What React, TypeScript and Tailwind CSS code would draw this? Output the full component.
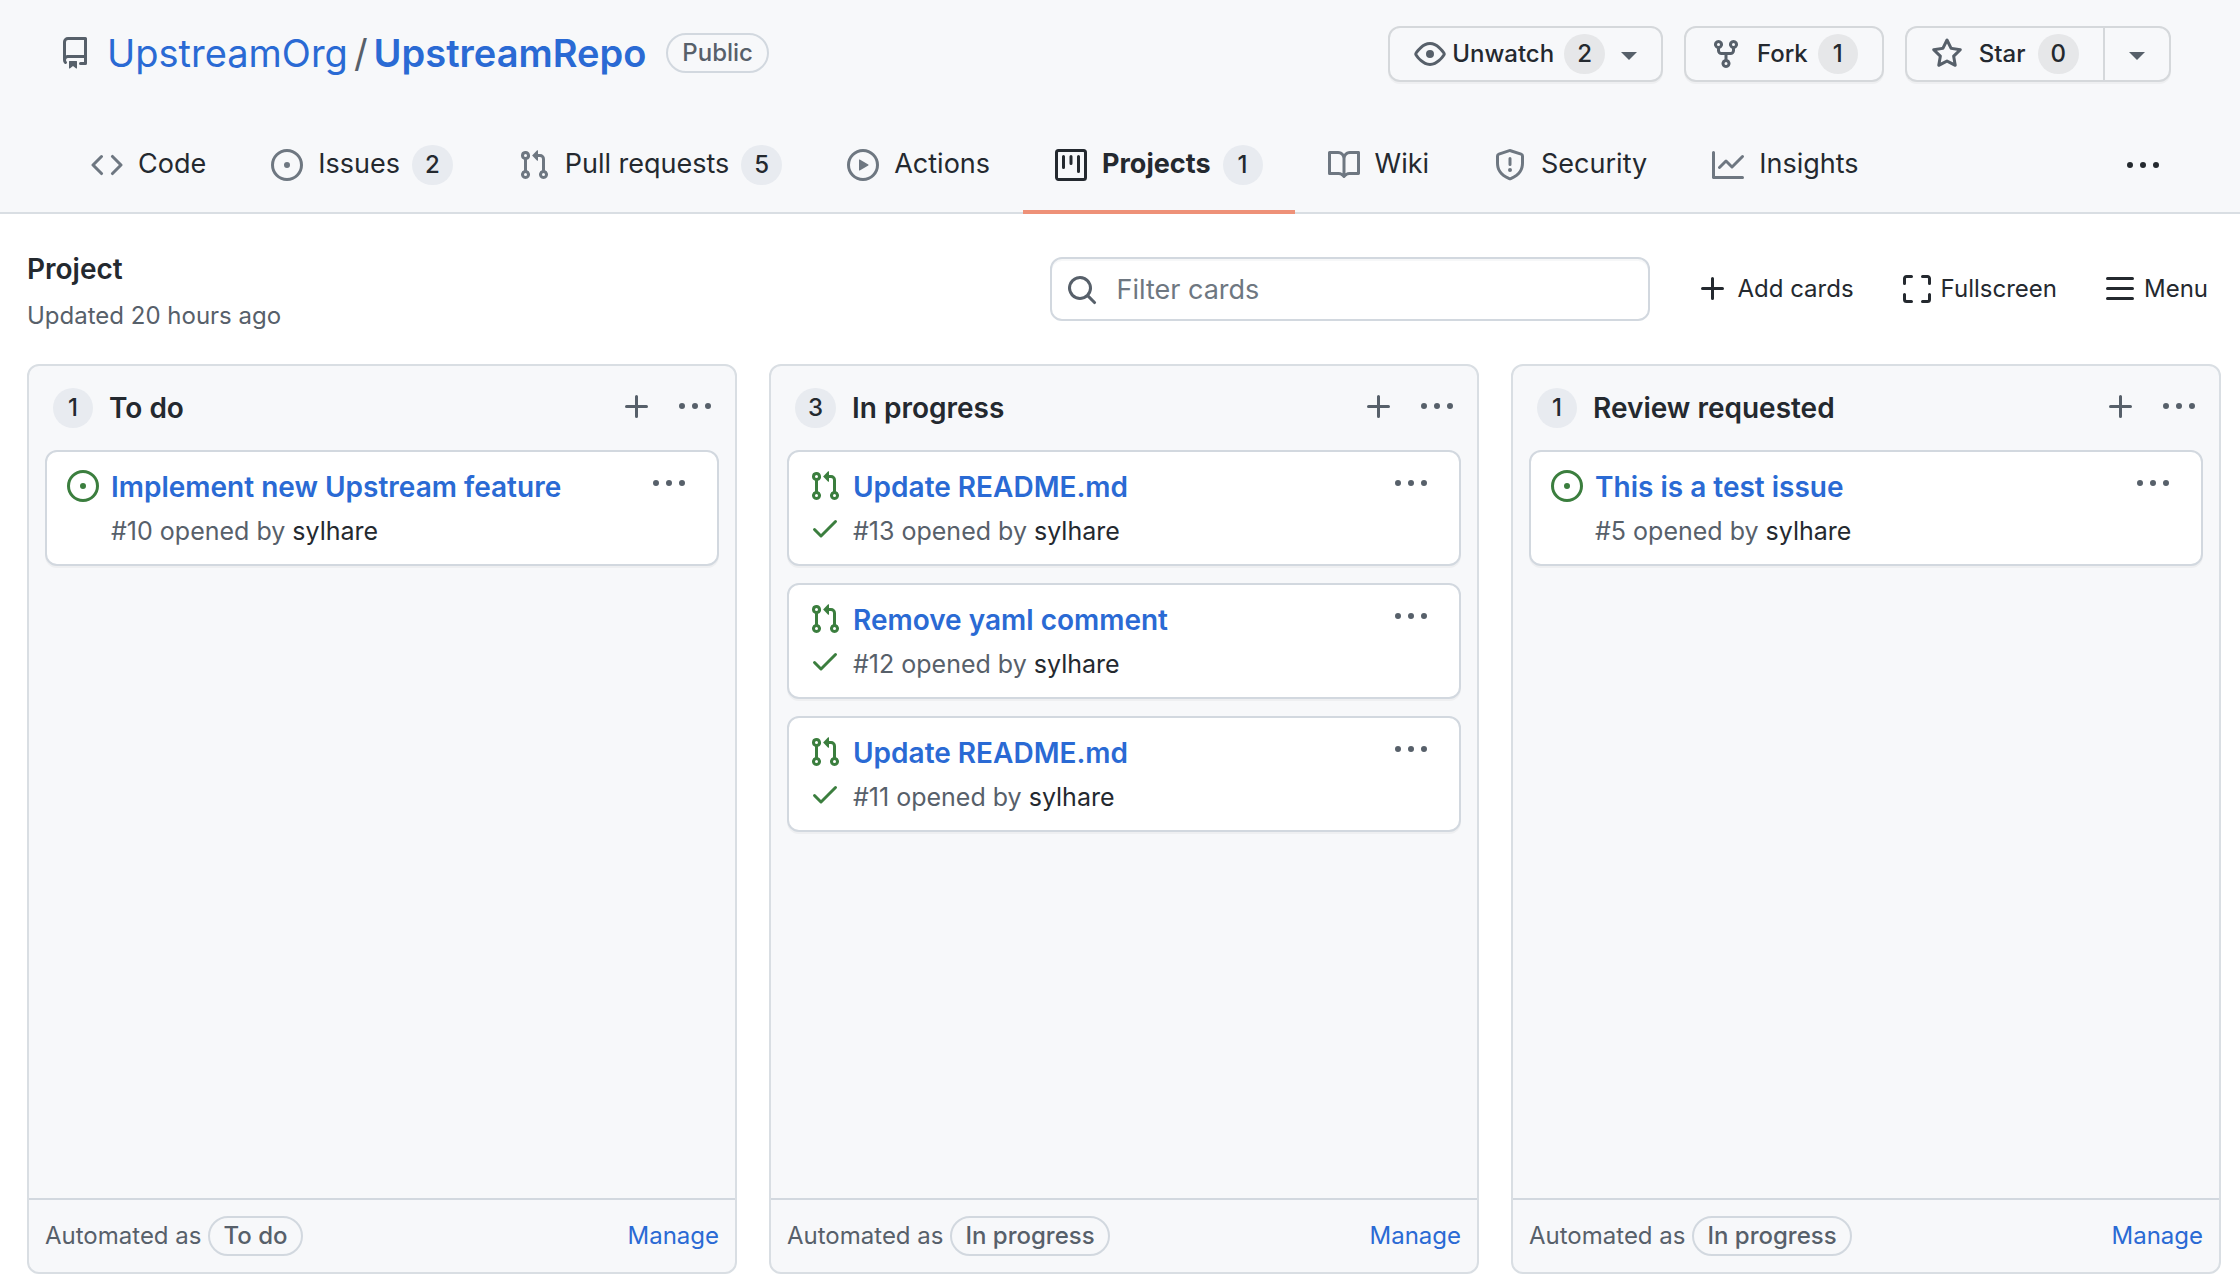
import type { ReactNode } from "react";

const paths = {
  repo: "M2 2.5A2.5 2.5 0 014.5 0h8.75a.75.75 0 01.75.75v12.5a.75.75 0 01-.75.75h-2.5a.75.75 0 110-1.5h1.75v-2h-8a1 1 0 00-.714 1.7.75.75 0 01-1.072 1.05A2.495 2.495 0 012 11.5v-9zm10.5-1V9h-8c-.356 0-.694.074-1 .208V2.5a1 1 0 011-1h8zM5 12.25v3.25a.25.25 0 00.4.2l1.45-1.087a.25.25 0 01.3 0L8.6 15.7a.25.25 0 00.4-.2v-3.25a.25.25 0 00-.25-.25h-3.5a.25.25 0 00-.25.25z",
  code: "M4.72 3.22a.75.75 0 011.06 1.06L2.06 8l3.72 3.72a.75.75 0 11-1.06 1.06L.47 8.53a.75.75 0 010-1.06l4.25-4.25zm6.56 0a.75.75 0 10-1.06 1.06L13.94 8l-3.72 3.72a.75.75 0 101.06 1.06l4.25-4.25a.75.75 0 000-1.06l-4.25-4.25z",
  issue: "M8 9.5a1.5 1.5 0 100-3 1.5 1.5 0 000 3zM8 0a8 8 0 100 16A8 8 0 008 0zM1.5 8a6.5 6.5 0 1113 0 6.5 6.5 0 01-13 0z",
  pull: "M7.177 3.073L9.573.677A.25.25 0 0110 .854v4.792a.25.25 0 01-.427.177L7.177 3.427a.25.25 0 010-.354zM3.75 2.5a.75.75 0 100 1.5.75.75 0 000-1.5zm-2.25.75a2.25 2.25 0 113 2.122v5.256a2.251 2.251 0 11-1.5 0V5.372A2.25 2.25 0 011.5 3.25zM11 2.5h-1V4h1a1 1 0 011 1v5.628a2.251 2.251 0 101.5 0V5A2.5 2.5 0 0011 2.5zm1 10.25a.75.75 0 111.5 0 .75.75 0 01-1.5 0zM3.75 12a.75.75 0 100 1.5.75.75 0 000-1.5z",
  play: "M1.5 8a6.5 6.5 0 1113 0 6.5 6.5 0 01-13 0zM8 0a8 8 0 100 16A8 8 0 008 0zM6.379 5.227A.25.25 0 006 5.442v5.117a.25.25 0 00.379.214l4.264-2.559a.25.25 0 000-.428L6.379 5.227z",
  project: "M1.75 0A1.75 1.75 0 000 1.75v12.5C0 15.216.784 16 1.75 16h12.5A1.75 1.75 0 0016 14.25V1.75A1.75 1.75 0 0014.25 0H1.75zM1.5 1.75a.25.25 0 01.25-.25h12.5a.25.25 0 01.25.25v12.5a.25.25 0 01-.25.25H1.75a.25.25 0 01-.25-.25V1.75zM11.75 3a.75.75 0 00-.75.75v7.5a.75.75 0 001.5 0v-7.5a.75.75 0 00-.75-.75zm-8.25.75a.75.75 0 011.5 0v5.5a.75.75 0 01-1.5 0v-5.5zM8 3a.75.75 0 00-.75.75v3.5a.75.75 0 001.5 0v-3.5A.75.75 0 008 3z",
  book: "M0 1.75A.75.75 0 01.75 1h4.253c1.227 0 2.317.59 3 1.501A3.744 3.744 0 0111.006 1h4.245a.75.75 0 01.75.75v10.5a.75.75 0 01-.75.75h-4.507a2.25 2.25 0 00-1.591.659l-.622.621a.75.75 0 01-1.06 0l-.622-.621A2.25 2.25 0 005.258 13H.75a.75.75 0 01-.75-.75V1.75zm8.755 3a2.25 2.25 0 012.25-2.25H14.5v9h-3.757c-.71 0-1.4.201-1.992.572l.004-7.322zm-1.504 7.324l.004-5.073-.002-2.253A2.25 2.25 0 005.003 2.5H1.5v9h3.757a3.75 3.75 0 011.994.574z",
  shield: "M7.467.133a1.75 1.75 0 011.066 0l5.25 1.68A1.75 1.75 0 0115 3.48V7c0 1.566-.32 3.182-1.303 4.682-.983 1.498-2.585 2.813-5.032 3.855a1.7 1.7 0 01-1.33 0c-2.447-1.042-4.049-2.357-5.032-3.855C1.32 10.182 1 8.566 1 7V3.48a1.75 1.75 0 011.217-1.667l5.25-1.68zm.61 1.429a.25.25 0 00-.153 0l-5.25 1.68a.25.25 0 00-.174.238V7c0 1.358.275 2.666 1.057 3.86.784 1.194 2.121 2.34 4.366 3.297a.2.2 0 00.154 0c2.245-.956 3.582-2.104 4.366-3.298C13.225 9.666 13.5 8.36 13.5 7V3.48a.25.25 0 00-.174-.237l-5.25-1.68zM9 10.5a1 1 0 11-2 0 1 1 0 012 0zm-.25-5.75a.75.75 0 10-1.5 0v3a.75.75 0 001.5 0v-3z",
  graph: "M1.5 1.75a.75.75 0 00-1.5 0v12.5c0 .414.336.75.75.75h14.5a.75.75 0 000-1.5H1.5V1.75zm14.28 2.53a.75.75 0 00-1.06-1.06L10 7.94 7.53 5.47a.75.75 0 00-1.06 0L3.22 8.72a.75.75 0 001.06 1.06L7 7.06l2.47 2.47a.75.75 0 001.06 0l5.25-5.25z",
  dots: "M8 9a1.5 1.5 0 100-3 1.5 1.5 0 000 3zM1.5 9a1.5 1.5 0 100-3 1.5 1.5 0 000 3zm13 0a1.5 1.5 0 100-3 1.5 1.5 0 000 3z",
  eye: "M1.679 7.932c.412-.621 1.242-1.75 2.366-2.717C5.175 4.242 6.527 3.5 8 3.5c1.473 0 2.824.742 3.955 1.715 1.124.967 1.954 2.096 2.366 2.717a.119.119 0 010 .136c-.412.621-1.242 1.75-2.366 2.717C10.825 11.758 9.473 12.5 8 12.5c-1.473 0-2.824-.742-3.955-1.715C2.92 9.818 2.09 8.69 1.679 8.068a.119.119 0 010-.136zM8 2c-1.981 0-3.67.992-4.933 2.078C1.797 5.169.88 6.423.43 7.1a1.619 1.619 0 000 1.798c.45.678 1.367 1.932 2.637 3.024C4.329 13.008 6.019 14 8 14c1.981 0 3.67-.992 4.933-2.078 1.27-1.091 2.187-2.345 2.637-3.023a1.619 1.619 0 000-1.798c-.45-.678-1.367-1.932-2.637-3.023C11.671 2.992 9.981 2 8 2zm0 8a2 2 0 100-4 2 2 0 000 4z",
  fork: "M5 3.25a.75.75 0 11-1.5 0 .75.75 0 011.5 0zm0 2.122a2.25 2.25 0 10-1.5 0v.878A2.25 2.25 0 005.75 8.5h1.5v2.128a2.251 2.251 0 101.5 0V8.5h1.5a2.25 2.25 0 002.25-2.25v-.878a2.25 2.25 0 10-1.5 0v.878a.75.75 0 01-.75.75h-4.5A.75.75 0 015 6.25v-.878zm3.75 7.378a.75.75 0 11-1.5 0 .75.75 0 011.5 0zm3-8.75a.75.75 0 100-1.5.75.75 0 000 1.5z",
  star: "M8 .25a.75.75 0 01.673.418l1.882 3.815 4.21.612a.75.75 0 01.416 1.279l-3.046 2.97.719 4.192a.75.75 0 01-1.088.791L8 12.347l-3.766 1.98a.75.75 0 01-1.088-.79l.72-4.194L.818 6.374a.75.75 0 01.416-1.28l4.21-.611L7.327.668A.75.75 0 018 .25zm0 2.445L6.615 5.5a.75.75 0 01-.564.41l-3.097.45 2.24 2.184a.75.75 0 01.216.664l-.528 3.084 2.769-1.456a.75.75 0 01.698 0l2.77 1.456-.53-3.084a.75.75 0 01.216-.664l2.24-2.183-3.096-.45a.75.75 0 01-.564-.41L8 2.694v.001z",
  plus: "M7.75 2a.75.75 0 01.75.75V7h4.25a.75.75 0 110 1.5H8.5v4.25a.75.75 0 11-1.5 0V8.5H2.75a.75.75 0 010-1.5H7V2.75A.75.75 0 017.75 2z",
  full: "M2.75 2.5a.25.25 0 00-.25.25v2.5a.75.75 0 01-1.5 0v-2.5C1 1.784 1.784 1 2.75 1h2.5a.75.75 0 010 1.5h-2.5zM10 1.75a.75.75 0 01.75-.75h2.5c.966 0 1.75.784 1.75 1.75v2.5a.75.75 0 01-1.5 0v-2.5a.25.25 0 00-.25-.25h-2.5a.75.75 0 01-.75-.75zM1.75 10a.75.75 0 01.75.75v2.5c0 .138.112.25.25.25h2.5a.75.75 0 010 1.5h-2.5A1.75 1.75 0 011 13.25v-2.5a.75.75 0 01.75-.75zm12.5 0a.75.75 0 01.75.75v2.5A1.75 1.75 0 0113.25 15h-2.5a.75.75 0 010-1.5h2.5a.25.25 0 00.25-.25v-2.5a.75.75 0 01.75-.75z",
  bars: "M1 2.75A.75.75 0 011.75 2h12.5a.75.75 0 110 1.5H1.75A.75.75 0 011 2.75zm0 5A.75.75 0 011.75 7h12.5a.75.75 0 110 1.5H1.75A.75.75 0 011 7.75zM1.75 12a.75.75 0 100 1.5h12.5a.75.75 0 100-1.5H1.75z",
  search: "M11.5 7a4.499 4.499 0 11-8.998 0A4.499 4.499 0 0111.5 7zm-.82 4.74a6 6 0 111.06-1.06l3.04 3.04a.75.75 0 11-1.06 1.06l-3.04-3.04z",
  check: "M13.78 4.22a.75.75 0 010 1.06l-7.25 7.25a.75.75 0 01-1.06 0L2.22 9.28a.75.75 0 011.06-1.06L6 10.94l6.72-6.72a.75.75 0 011.06 0z",
};

type IconName = keyof typeof paths;

function Icon({ name, className = "" }: { name: IconName; className?: string }) {
  return (
    <svg viewBox="0 0 16 16" fill="currentColor" fillRule="evenodd" aria-hidden="true" className={`size-8 shrink-0 ${className}`}>
      <path d={paths[name]} />
    </svg>
  );
}

function Caret() {
  return (
    <svg viewBox="0 0 16 8" fill="currentColor" aria-hidden="true" className="mt-1 h-2 w-4 shrink-0 text-[#57606a]">
      <path d="M0 0h16L8 8z" />
    </svg>
  );
}

function Count({ children }: { children: ReactNode }) {
  return (
    <span className="flex h-10 min-w-10 items-center justify-center rounded-full bg-[#e8ebf0] px-[13px] text-2xl font-medium text-[#24292f]">
      {children}
    </span>
  );
}

function ButtonCount({ children }: { children: ReactNode }) {
  return (
    <span className="flex h-10 min-w-10 items-center justify-center rounded-full bg-[#e6e7e9] px-[13px] text-2xl font-medium">
      {children}
    </span>
  );
}

const actionButton =
  "flex h-14 items-center border-2 border-[#d5d8db] bg-[#f7f8fa] px-6 text-2xl font-medium text-[#24292f] shadow-[0_2px_0_rgba(27,31,36,0.04)]";

const tabs: { icon: IconName; label: string; count?: number; active?: boolean }[] = [
  { icon: "code", label: "Code" },
  { icon: "issue", label: "Issues", count: 2 },
  { icon: "pull", label: "Pull requests", count: 5 },
  { icon: "play", label: "Actions" },
  { icon: "project", label: "Projects", count: 1, active: true },
  { icon: "book", label: "Wiki" },
  { icon: "shield", label: "Security" },
  { icon: "graph", label: "Insights" },
];

type CardData = { kind: "issue" | "pull"; title: string; number: number };

const columns: { name: string; automation: string; cards: CardData[] }[] = [
  { name: "To do", automation: "To do", cards: [{ kind: "issue", title: "Implement new Upstream feature", number: 10 }] },
  {
    name: "In progress",
    automation: "In progress",
    cards: [
      { kind: "pull", title: "Update README.md", number: 13 },
      { kind: "pull", title: "Remove yaml comment", number: 12 },
      { kind: "pull", title: "Update README.md", number: 11 },
    ],
  },
  { name: "Review requested", automation: "In progress", cards: [{ kind: "issue", title: "This is a test issue", number: 5 }] },
];

function Header() {
  return (
    <header className="border-b-2 border-[#d9dee3] bg-[#f7f8fa]">
      <div className="flex items-start justify-between pt-[26px] pr-[69px] pl-[59px]">
        <div className="flex h-[54px] items-center">
          <Icon name="repo" className="text-[#57606a]" />
          <h1 className="ml-4 flex items-center text-[38px] leading-[48px] text-[#57606a]">
            <a href="#org" className="text-[#2a6ad4]">UpstreamOrg</a>
            <span className="mx-1.5">/</span>
            <a href="#repo" className="font-semibold text-[#2a6ad4]">UpstreamRepo</a>
          </h1>
          <span className="ml-5 flex h-10 items-center rounded-full border-2 border-[#d2d8df] px-3.5 text-2xl font-medium text-[#57606a]">Public</span>
        </div>
        <div className="flex gap-[21px]">
          <button type="button" className={`${actionButton} rounded-xl`}>
            <Icon name="eye" className="text-[#57606a]" />
            <span className="ml-1.5">Unwatch</span>
            <span className="mr-4 ml-2.5"><ButtonCount>2</ButtonCount></span>
            <Caret />
          </button>
          <button type="button" className={`${actionButton} rounded-xl`}>
            <Icon name="fork" className="text-[#57606a]" />
            <span className="mr-2.5 ml-[15px]">Fork</span>
            <ButtonCount>1</ButtonCount>
          </button>
          <div className="flex">
            <button type="button" className={`${actionButton} rounded-l-xl border-r-0`}>
              <Icon name="star" className="text-[#57606a]" />
              <span className="mr-3 ml-4">Star</span>
              <ButtonCount>0</ButtonCount>
            </button>
            <button type="button" aria-label="Star options" className={`${actionButton} rounded-r-xl`}>
              <Caret />
            </button>
          </div>
        </div>
      </div>
      <div className="mt-[34px] flex items-center justify-between pr-[81px] pl-[59px]">
        <nav aria-label="Repository" className="-mb-0.5 flex gap-px">
          {tabs.map((tab) => (
            <a
              key={tab.label}
              href="#tab"
              aria-current={tab.active ? "page" : undefined}
              className={`flex h-[98px] items-center border-b-4 px-8 pt-[3px] text-[27px] text-[#24292f] ${tab.active ? "border-[#ee9178] font-bold" : "border-transparent"}`}
            >
              <Icon name={tab.icon} className={tab.active ? "text-[#24292f]" : "text-[#6e7781]"} />
              <span className="ml-[15px]">{tab.label}</span>
              {tab.count !== undefined && <span className="ml-3"><Count>{tab.count}</Count></span>}
            </a>
          ))}
        </nav>
        <button type="button" aria-label="More" className="pt-1 text-[#24292f]"><Icon name="dots" /></button>
      </div>
    </header>
  );
}

function Toolbar() {
  return (
    <div className="flex items-center justify-between py-[30px] pr-8 pl-[27px]">
      <div className="pt-1">
        <h2 className="text-[28px] leading-[42px] font-semibold">Project</h2>
        <p className="mt-2 text-2xl leading-9 text-[#57606a]">Updated 20 hours ago</p>
      </div>
      <div className="flex items-center gap-[47px] text-2xl">
        <label className="flex h-16 w-[600px] items-center rounded-xl border-2 border-[#d2d8df] bg-white px-3.5 pt-0.5 shadow-[inset_0_2px_0_rgba(208,215,222,0.2)]">
          <Icon name="search" className="text-[#57606a]" />
          <input type="search" aria-label="Filter cards" placeholder="Filter cards" className="ml-[18px] min-w-0 flex-1 text-[27px] outline-none placeholder:text-[#6e7781]" />
        </label>
        <button type="button" className="flex items-center gap-2"><Icon name="plus" />Add cards</button>
        <button type="button" className="flex items-center gap-2"><Icon name="full" />Fullscreen</button>
        <button type="button" className="flex items-center gap-2"><Icon name="bars" />Menu</button>
      </div>
    </div>
  );
}

function Card({ card }: { card: CardData }) {
  return (
    <article className="flex items-start rounded-xl border-2 border-[#d2d8df] bg-white pt-3.5 pr-8 pb-3.5 pl-5 shadow-[0_2px_0_rgba(27,31,36,0.04)]">
      <div className="flex flex-col gap-2.5 pt-1 text-[#3b7e3e]">
        <Icon name={card.kind} />
        {card.kind === "pull" && <Icon name="check" />}
      </div>
      <div className="ml-3 flex-1">
        <a href="#card" className="block text-[28px] leading-[42px] font-semibold text-[#2a6ad4]">{card.title}</a>
        <p className="mt-1 text-[25px] leading-[38px] text-[#57606a]">
          #{card.number} opened by <a href="#author" className="text-[#24292f]">sylhare</a>
        </p>
      </div>
      <button type="button" aria-label="Card menu" className="mt-0.5 text-[#57606a]"><Icon name="dots" /></button>
    </article>
  );
}

function Board() {
  return (
    <main className="grid flex-1 grid-cols-3 gap-8 pr-[19px] pb-2.5 pl-[27px]">
      {columns.map((column) => (
        <section key={column.name} className="flex flex-col rounded-xl border-2 border-[#d9dee3] bg-[#f7f8fa]">
          <div className="flex h-[84px] items-center px-6">
            <Count>{column.cards.length}</Count>
            <h3 className="ml-4 flex-1 text-[28px] font-semibold">{column.name}</h3>
            <button type="button" aria-label="Add a card" className="pb-[3px] text-[#57606a]"><Icon name="plus" /></button>
            <button type="button" aria-label="Column menu" className="ml-[26px] pb-[3px] text-[#57606a]"><Icon name="dots" /></button>
          </div>
          <div className="flex flex-1 flex-col gap-[17px] px-4">
            {column.cards.map((card) => <Card key={card.number} card={card} />)}
          </div>
          <div className="flex h-[74px] items-center justify-between border-t-2 border-[#d2d8df] px-4 text-2xl text-[#57606a]">
            <div className="flex items-center gap-[7px]">
              Automated as
              <span className="flex h-10 items-center rounded-full border-2 border-[#d2d8df] px-[13px] font-medium">{column.automation}</span>
            </div>
            <a href="#manage" className="text-[#2a6ad4]">Manage</a>
          </div>
        </section>
      ))}
    </main>
  );
}

export default function App() {
  return (
    <div className="flex min-h-screen flex-col bg-white font-['Inter','Liberation_Sans',sans-serif] text-[#24292f]">
      <Header />
      <Toolbar />
      <Board />
    </div>
  );
}
